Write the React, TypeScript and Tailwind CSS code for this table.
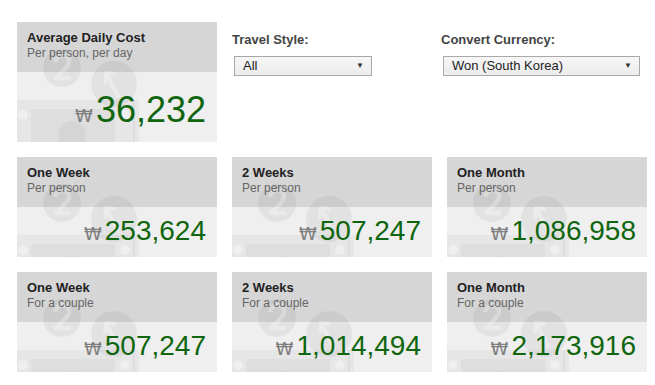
import React from "react";

const font = { fontFamily: '"Liberation Sans", Arial, sans-serif' };

function Pattern() {
  return (
    <svg
      className="absolute left-0 top-0 pointer-events-none"
      width="200"
      height="120"
      viewBox="0 0 200 120"
      aria-hidden="true"
    >
      <g>
        <rect x="-10" y="78" width="132" height="50" fill="#000" fillOpacity="0.035" />
        <rect x="14" y="87" width="84" height="40" fill="#000" fillOpacity="0.03" />
        <rect x="116" y="78" width="2" height="50" fill="#000" fillOpacity="0.04" />
        <circle cx="6" cy="93" r="5" fill="#fff" fillOpacity="0.35" />
        <circle cx="108" cy="93" r="5" fill="#fff" fillOpacity="0.35" />
        <circle cx="55" cy="113" r="14" fill="#000" fillOpacity="0.04" />
        <circle cx="45" cy="46" r="19" fill="#000" fillOpacity="0.05" />
        <path d="M38 40 Q40 33 46 33 Q53 34 52 41 Q50 46 39 56 L54 56" stroke="#fff" strokeOpacity="0.28" strokeWidth="4.5" fill="none" strokeLinejoin="round" />
        <circle cx="97" cy="62" r="23" fill="#000" fillOpacity="0.05" />
        <path d="M101 74 L90 53 M88 60 L89 51 L97 52" stroke="#fff" strokeOpacity="0.3" strokeWidth="4" fill="none" strokeLinecap="round" strokeLinejoin="round" />
      </g>
    </svg>
  );
}

function Card({
  title,
  sub,
  value,
  big,
}: {
  title: string;
  sub: string;
  value: string;
  big?: boolean;
}) {
  return (
    <div
      className={`relative flex flex-col w-[200px] overflow-hidden bg-[#efefef] ${big ? "h-[120px]" : "h-[100px]"}`}
    >
      <div className="absolute left-0 top-0 w-full h-[50px] bg-[#d6d6d6]" />
      <Pattern />
      <div className="relative h-[50px] px-[10px] pt-[8px]">
        <div className="text-[13px] leading-[16px] font-bold text-[#222]">{title}</div>
        <div className="text-[12px] leading-[15px] text-[#666]">{sub}</div>
      </div>
      <div
        className={`relative flex-1 flex items-end justify-end pr-[11px] ${big ? "pb-[14px]" : "pb-[12px]"}`}
      >
        <div className="flex items-baseline">
          <span
            className="text-[18px] leading-none text-[#7f7f7f] mr-[3px]"
            style={{ fontFamily: '"DejaVu Sans", "Liberation Sans", sans-serif' }}
          >
            ₩
          </span>
          <span
            className={`leading-none text-[#0f660f] ${big ? "text-[36px]" : "text-[28px]"}`}
          >
            {value}
          </span>
        </div>
      </div>
    </div>
  );
}

function Select({ value, width }: { value: string; width: string }) {
  return (
    <div
      className={`${width} h-[20px] ml-[2px] mt-[8px] flex items-center justify-between pl-[8px] pr-[7px] border border-[#a9a9a9] bg-gradient-to-b from-[#f7f7f7] to-[#ececec] text-[13px] text-[#222]`}
    >
      <span>{value}</span>
      <span className="text-[8px] text-[#333]">▼</span>
    </div>
  );
}

export default function App() {
  return (
    <div className="w-[655px] h-[385px] bg-white pl-[17px] pt-[22px]" style={font}>
      <div className="flex">
        <Card big title="Average Daily Cost" sub="Per person, per day" value="36,232" />
        <div className="ml-[15px] w-[209px] pt-[10px]">
          <div className="text-[13px] leading-[16px] font-bold text-[#444]">Travel Style:</div>
          <Select value="All" width="w-[138px]" />
        </div>
        <div className="pt-[10px]">
          <div className="text-[13px] leading-[16px] font-bold text-[#444]">Convert Currency:</div>
          <Select value="Won (South Korea)" width="w-[197px]" />
        </div>
      </div>
      <div className="flex gap-[15px] mt-[15px]">
        <Card title="One Week" sub="Per person" value="253,624" />
        <Card title="2 Weeks" sub="Per person" value="507,247" />
        <Card title="One Month" sub="Per person" value="1,086,958" />
      </div>
      <div className="flex gap-[15px] mt-[15px]">
        <Card title="One Week" sub="For a couple" value="507,247" />
        <Card title="2 Weeks" sub="For a couple" value="1,014,494" />
        <Card title="One Month" sub="For a couple" value="2,173,916" />
      </div>
    </div>
  );
}
